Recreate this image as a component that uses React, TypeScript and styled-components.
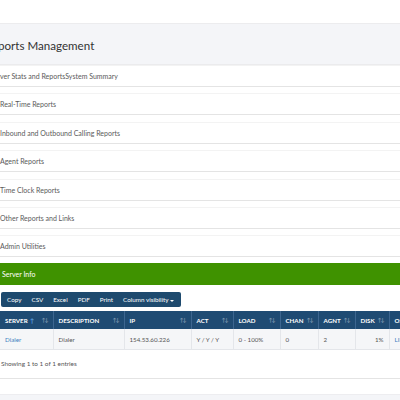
import styled, { createGlobalStyle } from 'styled-components';

const Global = createGlobalStyle`
  html, body { margin: 0; padding: 0; background: #fff; }
  body { font-family: Lato, "Open Sans", sans-serif; color: #444; overflow: hidden; }
`;

const Page = styled.div`
  width: 440px;
  margin-left: -10px;
  padding-top: 23px;
`;

const TitleBar = styled.div`
  background: #f4f5f8;
  border-top: 1px solid #ececee;
  border-bottom: 1px solid #ebebed;
  height: 40px;
  display: flex;
  align-items: center;
  padding-left: 10px;
`;

const Title = styled.h1`
  margin: 2px 0 0 -15px;
  font-size: 11.6px;
  font-weight: 400;
  color: #333;
`;

const List = styled.div`
  display: flex;
  flex-direction: column;
  gap: 6.4px;
`;

const Item = styled.div<{ $shift?: number }>`
  height: 20px;
  background: #fff;
  border-top: 1px solid #f3f3f3;
  border-bottom: 1px solid #e4e4e4;
  display: flex;
  align-items: center;
  padding-left: ${p => 10 - (p.$shift || 0)}px;
  font-size: 7px;
  color: #5a5a5a;
`;

const Card = styled.div`
  background: #fff;
  border-bottom: 1px solid #e4e4e4;
  margin-top: 6px;
`;

const CardHead = styled.div`
  background: #3f9200;
  color: #fff;
  height: 22px;
  display: flex;
  align-items: center;
  padding-left: 12px;
  font-size: 7px;
`;

const CardBody = styled.div`
  padding: 7px 0 0 11px;
  height: 86px;
`;

const Toolbar = styled.div`
  display: flex;
  width: max-content;
  background: #1e4a6e;
  border-radius: 2px;
  height: 15px;
  align-items: center;
  padding: 0 2px 0 1px;
`;

const ToolBtn = styled.span`
  color: #fff;
  font-size: 6.3px;
  padding: 0 5px;
`;

const Caret = styled.span`
  display: inline-block;
  margin-left: 2px;
  border-left: 2px solid transparent;
  border-right: 2px solid transparent;
  border-top: 2px solid #fff;
  vertical-align: middle;
`;

const Table = styled.table`
  margin-top: 4px;
  border-collapse: collapse;
  table-layout: fixed;
  margin-left: -1px;
`;

const Th = styled.th<{ $w: number }>`
  width: ${p => p.$w}px;
  height: 18px;
  padding: 0 0 0 5px;
  background: #1f4b73;
  color: #fff;
  font-size: 6.2px;
  font-weight: 700;
  text-align: left;
  border-right: 1px solid #3d6690;
  position: relative;
  box-sizing: border-box;
`;

const Sort = styled.span`
  position: absolute;
  right: 5px;
  top: 6px;
  font-size: 5.5px;
  color: #7f98b2;
  letter-spacing: -1px;
`;

const Asc = styled.span`
  color: #5aa0e0;
  margin-left: 2px;
`;

const Td = styled.td<{ $right?: boolean; $link?: boolean }>`
  height: 20px;
  padding: 0 5px;
  background: #f5f6f8;
  border-right: 1px solid #e4e6ea;
  border-bottom: 1px solid #e4e6ea;
  font-size: 6.2px;
  color: ${p => (p.$link ? '#3c7fc0' : '#555')};
  text-align: ${p => (p.$right ? 'right' : 'left')};
  box-sizing: border-box;
`;

const Info = styled.div`
  margin-top: 10px;
  margin-left: -10px;
  padding-left: 10px;
  font-size: 6.4px;
  color: #555;
`;

const Footer = styled.div`
  margin-top: 15px;
  height: 20px;
  background: #f4f5f8;
  border-top: 1px solid #ededf0;
`;

const items = [
  'Real-Time Reports',
  'Inbound and Outbound Calling Reports',
  'Agent Reports',
  'Time Clock Reports',
  'Other Reports and Links',
  'Admin Utilities',
];

const cols: [string, number][] = [
  ['SERVER', 53],
  ['DESCRIPTION', 71],
  ['IP', 67],
  ['ACT', 42],
  ['LOAD', 47],
  ['CHAN', 38],
  ['AGNT', 37],
  ['DISK', 34],
  ['OS', 40],
];

export default function App() {
  return (
    <>
      <Global />
      <Page>
        <TitleBar>
          <Title>Reports Management</Title>
        </TitleBar>
        <List>
          <Item $shift={16}>Server Stats and ReportsSystem Summary</Item>
          {items.map(t => (
            <Item key={t}>{t}</Item>
          ))}
        </List>
        <Card>
          <CardHead>Server Info</CardHead>
          <CardBody>
            <Toolbar>
              <ToolBtn>Copy</ToolBtn>
              <ToolBtn>CSV</ToolBtn>
              <ToolBtn>Excel</ToolBtn>
              <ToolBtn>PDF</ToolBtn>
              <ToolBtn>Print</ToolBtn>
              <ToolBtn>
                Column visibility<Caret />
              </ToolBtn>
            </Toolbar>
            <Table>
              <thead>
                <tr>
                  {cols.map(([c, w], i) => (
                    <Th key={c} $w={w}>
                      {c}
                      {i === 0 && <Asc>↑</Asc>}
                      <Sort>↑↓</Sort>
                    </Th>
                  ))}
                </tr>
              </thead>
              <tbody>
                <tr>
                  <Td $link>Dialer</Td>
                  <Td>Dialer</Td>
                  <Td>154.53.60.226</Td>
                  <Td>Y / Y / Y</Td>
                  <Td>0 - 100%</Td>
                  <Td>0</Td>
                  <Td>2</Td>
                  <Td $right>1%</Td>
                  <Td $link>LINUX</Td>
                </tr>
              </tbody>
            </Table>
            <Info>Showing 1 to 1 of 1 entries</Info>
          </CardBody>
        </Card>
        <Footer />
      </Page>
    </>
  );
}
